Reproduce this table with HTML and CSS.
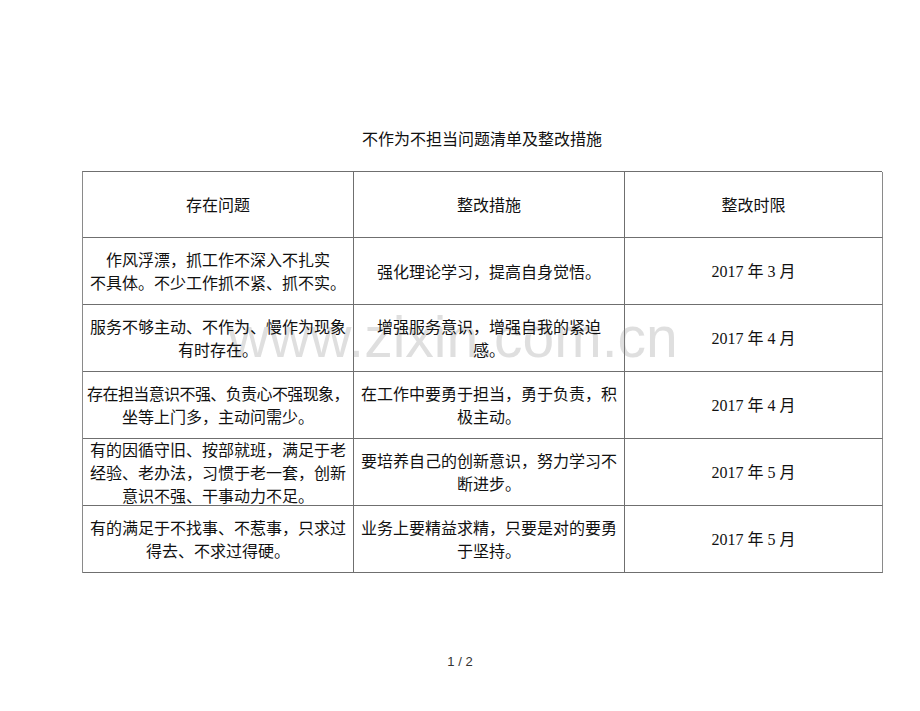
FILE: index.html
```html
<!DOCTYPE html>
<html lang="zh-CN">
<head>
<meta charset="utf-8">
<title>不作为不担当问题清单及整改措施</title>
<link rel="stylesheet" href="styles.css">
</head>
<body>
<div class="page">
  <div class="doc">
    <h1 class="title">不作为不担当问题清单及整改措施</h1>
    <div class="grid">
      <div class="cell head"><div class="txt">存在问题</div></div>
      <div class="cell head"><div class="txt">整改措施</div></div>
      <div class="cell head"><div class="txt">整改时限</div></div>

      <div class="cell"><div class="txt">作风浮漂，抓工作不深入不扎实<br>不具体。不少工作抓不紧、抓不实。</div></div>
      <div class="cell"><div class="txt">强化理论学习，提高自身觉悟。</div></div>
      <div class="cell date"><div class="txt">2017 年 3 月</div></div>

      <div class="cell"><div class="txt">服务不够主动、不作为、慢作为现象<br>有时存在。</div></div>
      <div class="cell"><div class="txt">增强服务意识，增强自我的紧迫<br>感。</div></div>
      <div class="cell date"><div class="txt">2017 年 4 月</div></div>

      <div class="cell tight"><div class="txt"><span class="squeeze">存在担当意识不强、负责心不强现象，</span><br>坐等上门多，主动问需少。</div></div>
      <div class="cell"><div class="txt">在工作中要勇于担当，勇于负责，积<br>极主动。</div></div>
      <div class="cell date"><div class="txt">2017 年 4 月</div></div>

      <div class="cell"><div class="txt">有的因循守旧、按部就班，满足于老<br>经验、老办法，习惯于老一套，创新<br>意识不强、干事动力不足。</div></div>
      <div class="cell"><div class="txt">要培养自己的创新意识，努力学习不<br>断进步。</div></div>
      <div class="cell date"><div class="txt">2017 年 5 月</div></div>

      <div class="cell"><div class="txt">有的满足于不找事、不惹事，只求过<br>得去、不求过得硬。</div></div>
      <div class="cell"><div class="txt">业务上要精益求精，只要是对的要勇<br>于坚持。</div></div>
      <div class="cell date"><div class="txt">2017 年 5 月</div></div>
    </div>
    <div class="watermark">www.zixin.com.cn</div>
  </div>
  <div class="pageno">1 / 2</div>
</div>
</body>
</html>
```

FILE: styles.css
```css
html, body {
  margin: 0;
  padding: 0;
  background: #ffffff;
}

.page {
  width: 920px;
  height: 711px;
  padding-top: 126px;
  box-sizing: border-box;
  font-family: "Liberation Serif", "Noto Sans CJK SC", serif;
  color: #111111;
}

.doc {
  position: relative;
  width: 800px;
  margin-left: 82px;
}

.title {
  margin: 0 0 21px 0;
  font-family: "Noto Sans CJK SC", sans-serif;
  font-size: 16px;
  font-weight: normal;
  line-height: 24px;
  text-align: center;
  color: #111111;
}

.grid {
  position: relative;
  display: grid;
  grid-template-columns: 271px 271px 258px;
  grid-auto-rows: 67px;
  grid-template-rows: 66px;
  border-top: 1px solid #6f6f6f;
  border-left: 1px solid #8a8a8a;
}

.cell {
  display: flex;
  align-items: center;
  justify-content: center;
  padding: 0 4px;
  border-right: 1px solid #6f6f6f;
  border-bottom: 1px solid #6f6f6f;
  font-family: "Noto Sans CJK SC", sans-serif;
  font-size: 16px;
  line-height: 23px;
  color: #111111;
}

.txt {
  text-align: center;
  white-space: nowrap;
  position: relative;
  z-index: 2;
}

.cell:nth-child(3n) {
  border-right: 1px solid #8a8a8a;
}

.date {
  font-family: "Liberation Serif", "Noto Sans CJK SC", serif;
}

.tight {
  padding: 0 1px;
}

.squeeze {
  letter-spacing: -0.6px;
}

.watermark {
  position: absolute;
  z-index: 1;
  left: 146px;
  top: 183px;
  font-family: "Liberation Sans", Arial, sans-serif;
  font-size: 57px;
  line-height: 57px;
  color: rgba(140, 140, 140, 0.28);
  white-space: nowrap;
  pointer-events: none;
}

.pageno {
  margin-top: 81px;
  text-align: center;
  font-family: "Liberation Sans", Arial, sans-serif;
  font-size: 13px;
  line-height: 16px;
  color: #333333;
}
```
